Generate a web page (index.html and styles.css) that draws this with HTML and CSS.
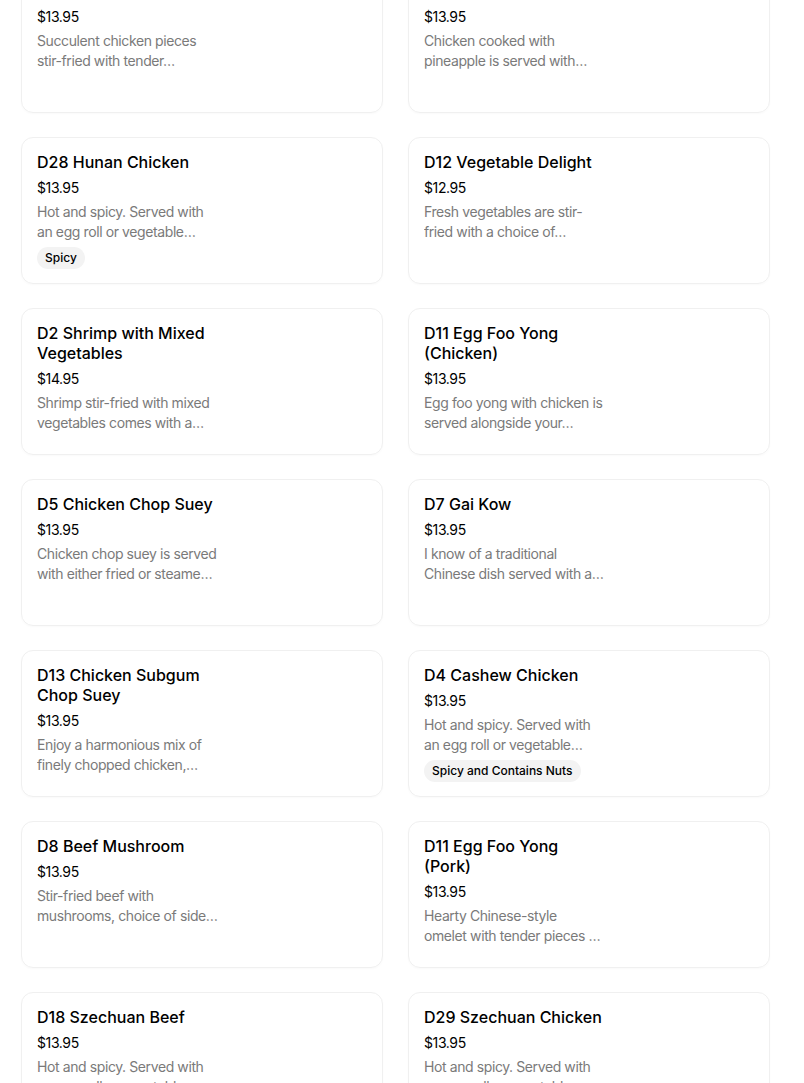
FILE: index.html
```html
<!DOCTYPE html>
<html lang="en">
<head>
<meta charset="utf-8">
<title>Menu</title>
<link rel="stylesheet" href="styles.css">
</head>
<body>
<div class="menu">
  <div class="card"><div class="info">
    <div class="title">D6 Chicken Broccoli</div>
    <div class="price">$13.95</div>
    <div class="desc">Succulent chicken pieces stir-fried with tender…</div>
  </div></div>
  <div class="card"><div class="info">
    <div class="title">D14 Pineapple Chicken</div>
    <div class="price">$13.95</div>
    <div class="desc">Chicken cooked with pineapple is served with…</div>
  </div></div>

  <div class="card"><div class="info">
    <div class="title">D28 Hunan Chicken</div>
    <div class="price">$13.95</div>
    <div class="desc">Hot and spicy. Served with an egg roll or vegetable…</div>
    <span class="tag">Spicy</span>
  </div></div>
  <div class="card"><div class="info">
    <div class="title">D12 Vegetable Delight</div>
    <div class="price">$12.95</div>
    <div class="desc">Fresh vegetables are stir-fried with a choice of…</div>
  </div></div>

  <div class="card"><div class="info">
    <div class="title">D2 Shrimp with Mixed Vegetables</div>
    <div class="price">$14.95</div>
    <div class="desc">Shrimp stir-fried with mixed vegetables comes with a…</div>
  </div></div>
  <div class="card"><div class="info">
    <div class="title">D11 Egg Foo Yong (Chicken)</div>
    <div class="price">$13.95</div>
    <div class="desc">Egg foo yong with chicken is served alongside your…</div>
  </div></div>

  <div class="card"><div class="info">
    <div class="title">D5 Chicken Chop Suey</div>
    <div class="price">$13.95</div>
    <div class="desc">Chicken chop suey is served with either fried or steame…</div>
  </div></div>
  <div class="card"><div class="info">
    <div class="title">D7 Gai Kow</div>
    <div class="price">$13.95</div>
    <div class="desc">I know of a traditional Chinese dish served with a…</div>
  </div></div>

  <div class="card"><div class="info">
    <div class="title">D13 Chicken Subgum Chop Suey</div>
    <div class="price">$13.95</div>
    <div class="desc">Enjoy a harmonious mix of finely chopped chicken,…</div>
  </div></div>
  <div class="card"><div class="info">
    <div class="title">D4 Cashew Chicken</div>
    <div class="price">$13.95</div>
    <div class="desc">Hot and spicy. Served with an egg roll or vegetable…</div>
    <span class="tag">Spicy and Contains Nuts</span>
  </div></div>

  <div class="card"><div class="info">
    <div class="title">D8 Beef Mushroom</div>
    <div class="price">$13.95</div>
    <div class="desc">Stir-fried beef with mushrooms, choice of side…</div>
  </div></div>
  <div class="card"><div class="info">
    <div class="title">D11 Egg Foo Yong (Pork)</div>
    <div class="price">$13.95</div>
    <div class="desc">Hearty Chinese-style<br>omelet with tender pieces …</div>
  </div></div>

  <div class="card"><div class="info">
    <div class="title">D18 Szechuan Beef</div>
    <div class="price">$13.95</div>
    <div class="desc">Hot and spicy. Served with an egg roll or vegetable…</div>
    <span class="tag">Spicy</span>
  </div></div>
  <div class="card"><div class="info">
    <div class="title">D29 Szechuan Chicken</div>
    <div class="price">$13.95</div>
    <div class="desc">Hot and spicy. Served with an egg roll or vegetable…</div>
    <span class="tag">Spicy</span>
  </div></div>
</div>
</body>
</html>
```
FILE: styles.css
```css
html, body {
  margin: 0;
  padding: 0;
  background: #ffffff;
}
body {
  font-family: Inter, "Liberation Sans", sans-serif;
  color: #000000;
  overflow: hidden;
}
.menu {
  display: grid;
  grid-template-columns: 362px 362px;
  column-gap: 25px;
  row-gap: 24px;
  margin: -34px 0 0 21px;
  width: 749px;
}
.card {
  box-sizing: border-box;
  height: 147px;
  border: 1px solid #f0f0f0;
  border-radius: 12px;
  padding: 14px 15px 15px;
  box-shadow: 0 1px 2px rgba(0, 0, 0, 0.025);
}
.info {
  width: 181px;
  display: flex;
  flex-direction: column;
  align-items: flex-start;
}
.title {
  font-size: 16px;
  font-weight: 500;
  line-height: 20px;
  letter-spacing: 0;
  margin-bottom: 6px;
}
.price {
  font-size: 14px;
  line-height: 20px;
  letter-spacing: -0.4px;
  margin-bottom: 4px;
}
.desc {
  font-size: 14px;
  line-height: 20px;
  color: #7a7a7a;
  letter-spacing: -0.4px;
  display: -webkit-box;
  -webkit-box-orient: vertical;
  -webkit-line-clamp: 2;
  overflow: hidden;
  width: 181px;
}
.tag {
  margin-top: 5px;
  font-size: 12px;
  font-weight: 500;
  line-height: 22px;
  padding: 0 8px;
  border-radius: 11px;
  background: #f3f3f3;
  color: #000;
}
```
